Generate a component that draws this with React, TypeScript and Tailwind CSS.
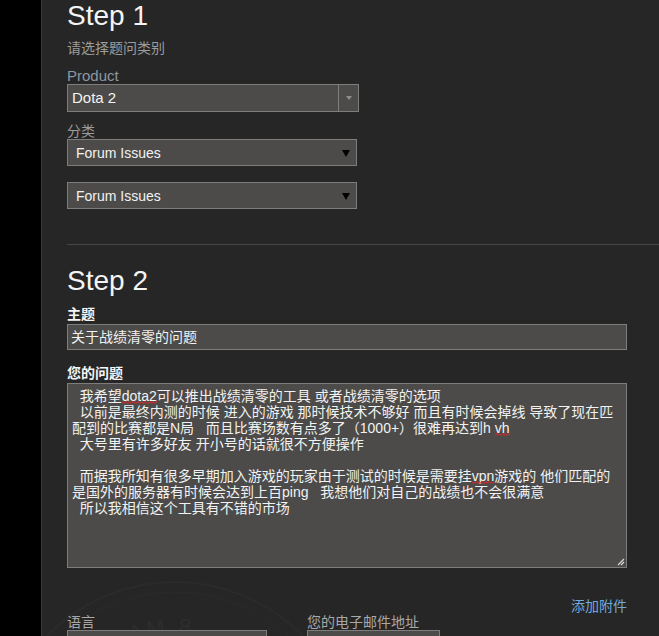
const Squiggle = ({ children }: { children: string }) => {
  return (
    <span className="relative">
      {children}
      <svg className="absolute left-0 top-[13px] h-[3px] w-full overflow-hidden" viewBox="0 0 40 3" preserveAspectRatio="xMinYMin slice">
        <path
          d="M0 2.5 L1.5 0.5 L3 2.5 L4.5 0.5 L6 2.5 L7.5 0.5 L9 2.5 L10.5 0.5 L12 2.5 L13.5 0.5 L15 2.5 L16.5 0.5 L18 2.5 L19.5 0.5 L21 2.5 L22.5 0.5 L24 2.5 L25.5 0.5 L27 2.5 L28.5 0.5 L30 2.5 L31.5 0.5 L33 2.5 L34.5 0.5 L36 2.5 L37.5 0.5 L39 2.5"
          fill="none"
          stroke="#e0262b"
          strokeWidth="1"
        />
      </svg>
    </span>
  );
};

const SelectBox = ({ label }: { label: string }) => {
  return (
    <div className="flex h-[27px] w-[290px] items-center justify-between border border-[#7d7d7b] bg-[#4c4b49] pl-[8px] pr-[6px]">
      <span className="text-[14px] leading-[16px] text-[#f2f2f2]">{label}</span>
      <span className="mt-[1px] h-0 w-0 border-x-[4px] border-t-[7px] border-x-transparent border-t-black" />
    </div>
  );
};

// faint team logo behind the bottom form fields
const Watermark = () => {
  return (
    <svg
      className="pointer-events-none absolute left-0 top-[560px]"
      width="320"
      height="76"
      viewBox="0 0 320 76"
    >
      <defs>
        <path id="arc" d="M 7 200 A 126 126 0 0 1 259 200" />
      </defs>
      <circle cx="133" cy="200" r="178" fill="none" stroke="#2b2b2b" strokeWidth="2" />
      <circle cx="133" cy="200" r="168" fill="none" stroke="#2a2a2a" strokeWidth="1" />
      <text fill="#2d2d2d" fontSize="22" fontFamily="Liberation Sans, sans-serif" letterSpacing="3">
        <textPath href="#arc" startOffset="30%">
          TEAM 8
        </textPath>
      </text>
    </svg>
  );
};

const App = () => {
  return (
    <div className="flex h-[636px] w-[659px] overflow-hidden bg-black font-['Liberation_Sans','Noto_Sans_CJK_SC',sans-serif]">
      <div className="w-[41px] shrink-0 bg-black" />
      <div className="relative flex-1 border-l border-[#3b3b3b] bg-[#262626]">
        <Watermark />
        <div className="relative flex flex-col">
          {/* step 1 */}
          <div className="pl-[25px]">
            <div className="h-[30px] pt-[2px] text-[28px] leading-[28px] text-[#f4f4f4]">Step 1</div>
            <div className="mt-[10px] text-[14px] leading-[16px] text-[#9c9c9c]">请选择题问类别</div>
            <div className="mt-[12px] h-[16px] text-[15px] leading-[16px] text-[#8b98a3]">Product</div>
            <div className="flex h-[28px] w-[292px] border border-[#7d7d7b] bg-[#4c4b49]">
              <div className="flex flex-1 items-center pl-[4px] text-[15px] leading-[16px] text-[#f4f4f4]">
                Dota 2
              </div>
              <div className="flex w-[20px] items-center justify-center border-l border-[#7d7d7b]">
                <span className="h-0 w-0 border-x-[3px] border-t-[4px] border-x-transparent border-t-[#8e8e8c]" />
              </div>
            </div>
            <div className="mt-[11px] h-[16px] text-[14px] leading-[16px] text-[#9c9c9c]">分类</div>
            <SelectBox label="Forum Issues" />
            <div className="mt-[16px]">
              <SelectBox label="Forum Issues" />
            </div>
          </div>

          <div className="ml-[25px] mt-[35px] h-px bg-[#464646]" />

          {/* step 2 */}
          <div className="pl-[25px]">
            <div className="mt-[20px] h-[30px] pt-[2px] text-[28px] leading-[28px] text-[#f4f4f4]">Step 2</div>
            <div className="mt-[11px] text-[14px] font-bold leading-[16px] text-[#f4f4f4]">主题</div>
            <div className="mt-[2px] flex h-[26px] w-[560px] items-center border border-[#7d7d7b] bg-[#4c4b49] pl-[3px] text-[14px] leading-[16px] text-[#f2f2f2]">
              关于战绩清零的问题
            </div>
            <div className="mt-[15px] text-[14px] font-bold leading-[16px] text-[#f4f4f4]">您的问题</div>
            <div className="relative mt-[2px] h-[185px] w-[560px] whitespace-pre border border-[#7d7d7b] bg-[#4c4b49] px-[4px] pt-[4px] text-[14px] leading-[16px] text-[#f2f2f2]">
              <div>
                {"  我希望"}
                <Squiggle>dota2</Squiggle>
                {"可以推出战绩清零的工具 或者战绩清零的选项"}
              </div>
              <div>{"  以前是最终内测的时候 进入的游戏 那时候技术不够好 而且有时候会掉线 导致了现在匹"}</div>
              <div>
                {"配到的比赛都是N局   而且比赛场数有点多了（1000+）很难再达到h "}
                <Squiggle>vh</Squiggle>
              </div>
              <div>{"  大号里有许多好友 开小号的话就很不方便操作"}</div>
              <div>{" "}</div>
              <div>
                {"  而据我所知有很多早期加入游戏的玩家由于测试的时候是需要挂"}
                <Squiggle>vpn</Squiggle>
                {"游戏的 他们匹配的"}
              </div>
              <div>{"是国外的服务器有时候会达到上百ping   我想他们对自己的战绩也不会很满意"}</div>
              <div>{"  所以我相信这个工具有不错的市场"}</div>
              <svg className="absolute bottom-[1px] right-[1px]" width="9" height="9" viewBox="0 0 9 9">
                <path d="M8 2 L2 8 M8 5 L5 8" stroke="#d8d8d8" strokeWidth="1.2" />
              </svg>
            </div>
            <div className="mt-[30px] flex w-[560px] justify-end text-[14px] leading-[16px] text-[#72a9da]">
              <span>添加附件</span>
            </div>
            <div className="flex gap-[40px] text-[14px] leading-[16px] text-[#a8a8a8]">
              <div className="flex w-[200px] flex-col">
                <span>语言</span>
                <div className="h-[26px] border border-[#7d7d7b] bg-[#4c4b49]" />
              </div>
              <div className="flex w-[133px] flex-col">
                <span className="whitespace-nowrap">您的电子邮件地址</span>
                <div className="h-[26px] border border-[#7d7d7b] bg-[#4c4b49]" />
              </div>
            </div>
          </div>
        </div>
      </div>
    </div>
  );
};

export default App;
